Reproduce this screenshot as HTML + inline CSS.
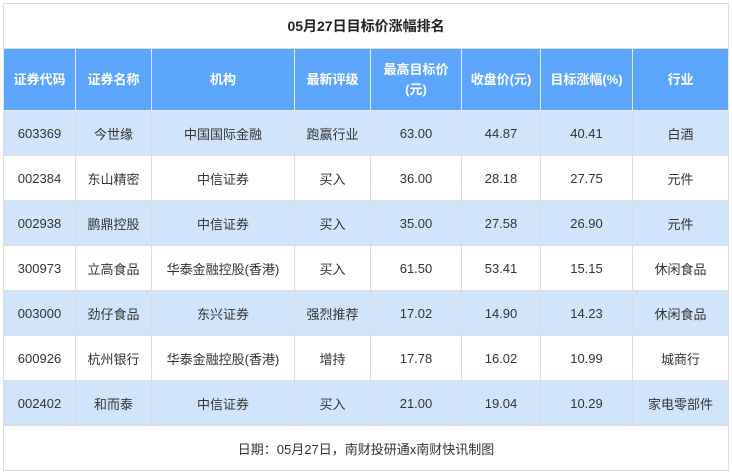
<!DOCTYPE html>
<html><head><meta charset="utf-8"><style>
body{margin:0;background:#fff;font-family:"Liberation Sans","Noto Sans CJK SC",sans-serif;}
table{position:absolute;left:3px;top:3px;border-collapse:collapse;table-layout:fixed;width:725px;}
td{border:1px solid #dcdcdc;text-align:center;font-size:13px;color:#333;padding:0;height:44px;}
tr.h td{background:#5ba5fd;color:#fff;font-weight:bold;height:61px;border-color:#e8e8e8;line-height:20px}
tr.t td{font-weight:bold;font-size:14px;color:#222;height:44px}
tr.a td{background:#d0e4fc}
tr.f td{height:44px;color:#333}
</style></head><body>
<table>
<colgroup><col style="width:72px"><col style="width:76px"><col style="width:143px"><col style="width:76px"><col style="width:91px"><col style="width:79px"><col style="width:92px"><col style="width:96px"></colgroup>
<tr class="t"><td colspan="8">05月27日目标价涨幅排名</td></tr>
<tr class="h"><td>证券代码</td><td>证券名称</td><td>机构</td><td>最新评级</td><td>最高目标价<br>(元)</td><td>收盘价(元)</td><td>目标涨幅(%)</td><td>行业</td></tr>
<tr class="a"><td>603369</td><td>今世缘</td><td>中国国际金融</td><td>跑赢行业</td><td>63.00</td><td>44.87</td><td>40.41</td><td>白酒</td></tr>
<tr><td>002384</td><td>东山精密</td><td>中信证券</td><td>买入</td><td>36.00</td><td>28.18</td><td>27.75</td><td>元件</td></tr>
<tr class="a"><td>002938</td><td>鹏鼎控股</td><td>中信证券</td><td>买入</td><td>35.00</td><td>27.58</td><td>26.90</td><td>元件</td></tr>
<tr><td>300973</td><td>立高食品</td><td>华泰金融控股(香港)</td><td>买入</td><td>61.50</td><td>53.41</td><td>15.15</td><td>休闲食品</td></tr>
<tr class="a"><td>003000</td><td>劲仔食品</td><td>东兴证券</td><td>强烈推荐</td><td>17.02</td><td>14.90</td><td>14.23</td><td>休闲食品</td></tr>
<tr><td>600926</td><td>杭州银行</td><td>华泰金融控股(香港)</td><td>增持</td><td>17.78</td><td>16.02</td><td>10.99</td><td>城商行</td></tr>
<tr class="a"><td>002402</td><td>和而泰</td><td>中信证券</td><td>买入</td><td>21.00</td><td>19.04</td><td>10.29</td><td>家电零部件</td></tr>
<tr class="f"><td colspan="8">日期：05月27日，南财投研通x南财快讯制图</td></tr>
</table>
</body></html>
